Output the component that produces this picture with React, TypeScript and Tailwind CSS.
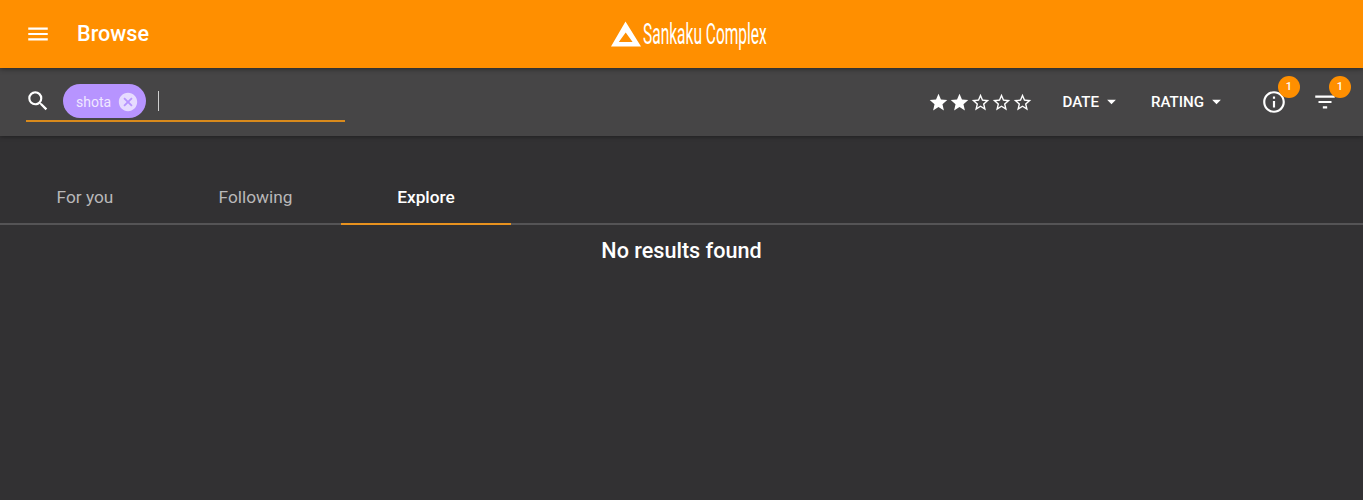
import {
  MdArrowDropDown,
  MdCancel,
  MdFilterList,
  MdInfoOutline,
  MdMenu,
  MdSearch,
  MdStar,
  MdStarBorder,
} from "react-icons/md";

const Logo = () => (
  <div className="flex items-center">
    <svg width="32" height="28" viewBox="0 0 32 28" className="shrink-0">
      <path
        fill="#fff"
        fillRule="evenodd"
        d="M15.5 1.5 31 26.5H1L15.5 1.5ZM15.7 12.5 8.8 22H22.6L15.7 12.5Z"
      />
    </svg>
    <span className="ml-[1px] w-[124px] origin-left scale-x-[0.535] whitespace-nowrap font-['Roboto',sans-serif] text-[29px] leading-none text-white">
      Sankaku Complex
    </span>
  </div>
);

const Badge = ({ className }: { className: string }) => (
  <span
    className={`absolute flex h-[22px] w-[22px] items-center justify-center rounded-full bg-[#ff8f00] text-[11px] font-medium text-white ${className}`}
  >
    1
  </span>
);

const SortButton = ({ label, className }: { label: string; className: string }) => (
  <button className={`flex items-center text-[15.1px] font-medium text-white ${className}`}>
    {label}
    <MdArrowDropDown size={21} className="-mr-[5px] ml-[2px]" />
  </button>
);

export default function App() {
  return (
    <div className="h-[500px] overflow-hidden bg-[#323133] font-['Roboto',sans-serif]">
      <header className="relative z-20 grid h-[68px] grid-cols-[1fr_auto_1fr] items-center bg-[#ff8f00] pr-[12px] pl-[25px] shadow-[0_1px_5px_rgba(0,0,0,0.45)]">
        <div className="flex items-center text-white">
          <MdMenu size={26} />
          <h1 className="ml-[26px] text-[21.6px] font-medium">Browse</h1>
        </div>
        <Logo />
        <div />
      </header>

      <div className="relative z-10 flex h-[68px] items-center bg-[#464546] pr-[25px] pl-[26px] shadow-[0_1px_4px_rgba(0,0,0,0.35)]">
        <div className="mt-[-6px] flex h-[46px] w-[319px] items-center border-b-2 border-[#d98a1c] pt-[6px]">
          <MdSearch size={26} className="-ml-px text-white" />
          <div className="ml-[12px] flex h-[34px] w-[83px] items-center rounded-full bg-[#b794ff] pt-px pl-[13px] text-sm text-[#f0e8ff]">
            shota
            <MdCancel size={22} className="ml-[6px] text-[#e6dbff]" />
          </div>
          <span className="ml-[12px] h-[20px] w-px bg-[#cfcfcf]" />
        </div>

        <div className="ml-auto flex items-center text-white">
          <MdStar size={21} />
          <MdStar size={21} />
          <MdStarBorder size={21} />
          <MdStarBorder size={21} />
          <MdStarBorder size={21} />
        </div>
        <SortButton label="DATE" className="ml-[29px]" />
        <SortButton label="RATING" className="ml-[34px]" />
        <div className="relative ml-[39px] text-white">
          <MdInfoOutline size={26} />
          <Badge className="-top-[13px] -right-[13px]" />
        </div>
        <div className="relative ml-[25px] text-white">
          <MdFilterList size={26} />
          <Badge className="-top-[13px] -right-[13px]" />
        </div>
      </div>

      <nav className="mt-[36px] flex h-[53px] border-b-2 border-[#555456]">
        <button className="h-[53px] w-[170px] shrink-0 border-b-2 border-transparent text-[17.3px] text-[#b9b8b9]">
          For you
        </button>
        <button className="h-[53px] w-[171px] shrink-0 border-b-2 border-transparent text-[17.3px] text-[#b9b8b9]">
          Following
        </button>
        <button className="h-[53px] w-[170px] shrink-0 border-b-2 border-[#e8921f] text-[17.3px] font-medium text-white">
          Explore
        </button>
      </nav>

      <p className="mt-[10px] text-center text-[21.6px] font-medium text-white">No results found</p>
    </div>
  );
}
